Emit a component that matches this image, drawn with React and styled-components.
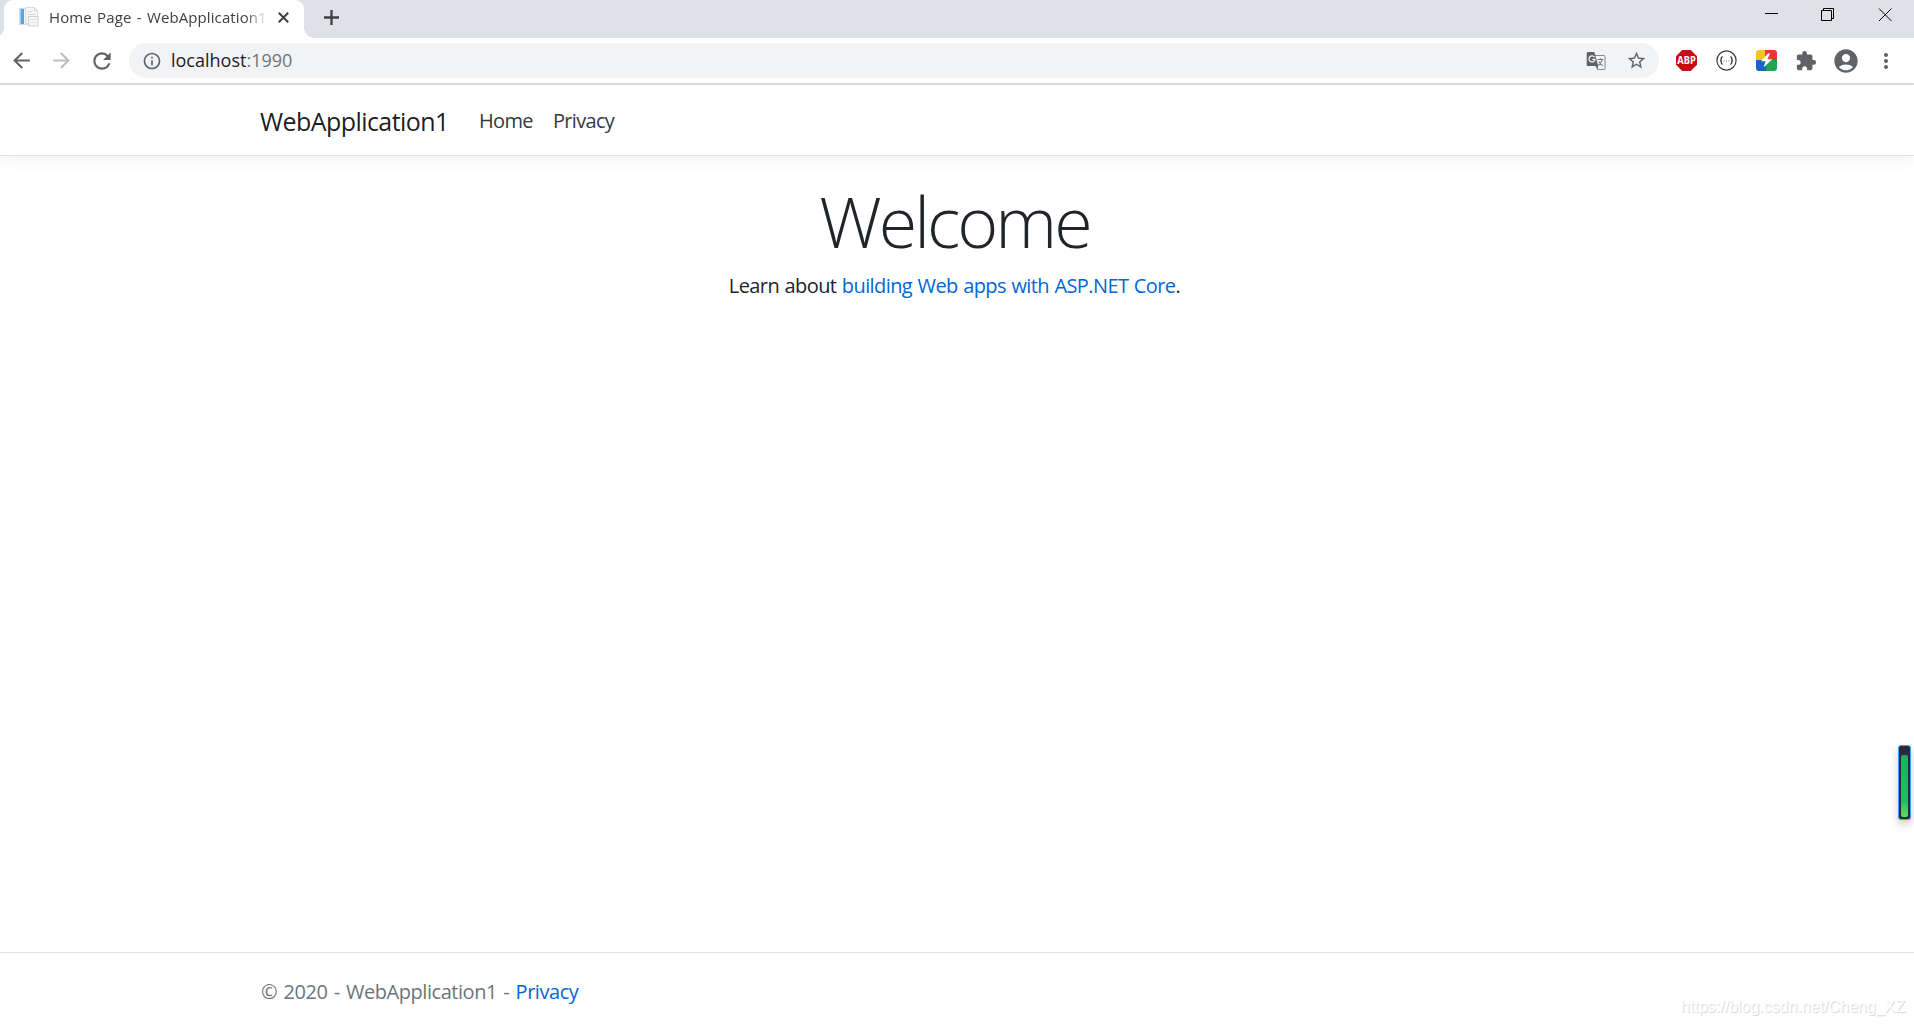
import React from "react";
import styled, { createGlobalStyle } from "styled-components";
import {
  MdArrowBack,
  MdArrowForward,
  MdRefresh,
  MdInfoOutline,
  MdStarBorder,
  MdExtension,
  MdAccountCircle,
  MdMoreVert,
} from "react-icons/md";

const GlobalStyle = createGlobalStyle`
  * { box-sizing: border-box; }
  body { margin: 0; background: #fff; overflow: hidden; }
  a { color: #0366d6; text-decoration: none; }
  svg { display: block; flex-shrink: 0; overflow: visible; }
`;

const Window = styled.div`
  position: relative;
  display: flex;
  flex-direction: column;
  height: 1025px;
  font-family: "Open Sans", "Noto Sans", sans-serif;
  color: #212529;
`;

const TabStrip = styled.div`
  display: flex;
  height: 38px;
  padding-left: 4px;
  background: #dee1e6;
`;

const Tab = styled.div`
  position: relative;
  display: flex;
  align-items: center;
  width: 300px;
  padding: 0 15px 4px;
  background: #fff;
  border-radius: 9px 9px 0 0;

  &::before,
  &::after {
    content: "";
    position: absolute;
    bottom: 0;
    width: 10px;
    height: 10px;
  }
  &::before { left: -10px; background: radial-gradient(circle at 0 0, transparent 9.5px, #fff 10px); }
  &::after { right: -10px; background: radial-gradient(circle at 100% 0, transparent 9.5px, #fff 10px); }
`;

const TabTitle = styled.span`
  width: 222px;
  margin-left: 10px;
  overflow: hidden;
  white-space: nowrap;
  font-size: 15px;
  line-height: 22px;
  letter-spacing: 0.1px;
  word-spacing: 1.3px;
  color: #3c4043;
  mask-image: linear-gradient(90deg, #000 196px, transparent 219px);
`;

const TabClose = styled.div`
  margin-left: 8px;
`;

const NewTab = styled.div`
  padding: 10px 0 0 20px;
`;

const WindowControls = styled.div`
  display: flex;
  gap: 44px;
  margin-left: auto;
  padding: 8px 22px 0 0;
`;

const Toolbar = styled.div`
  display: flex;
  align-items: center;
  height: 47px;
  padding-left: 9px;
  border-bottom: 2px solid #dadce0;
  color: #5f6368;
`;

const NavButtons = styled.div`
  display: flex;
  flex-shrink: 0;
  gap: 15px;
  width: 120px;
`;

const NavButton = styled.span`
  display: flex;
  align-items: center;
  justify-content: center;
  width: 25px;
  height: 26px;
  color: ${(p) => (p.$disabled ? "#bcbec1" : "#5f6368")};
`;

const AddressBar = styled.div`
  display: flex;
  align-items: center;
  flex-shrink: 0;
  width: 1530px;
  height: 35px;
  padding: 0 12px 0 13px;
  border-radius: 18px;
  background: #f1f3f4;
`;

const Url = styled.span`
  flex: 1;
  margin-left: 9px;
  padding-bottom: 2px;
  font-size: 18px;
  line-height: 24px;
  color: #70757a;

  b { font-weight: 400; color: #202124; }
`;

const PageActions = styled.div`
  display: flex;
  align-items: center;
  gap: 20px;
`;

const Extensions = styled.div`
  display: flex;
  flex-shrink: 0;
  margin-left: 7px;
`;

const Extension = styled.span`
  display: flex;
  align-items: center;
  justify-content: center;
  width: 40px;
  height: 40px;
`;

const Page = styled.div`
  flex: 1;
  display: flex;
  flex-direction: column;
`;

const Container = styled.div`
  display: flex;
  align-items: center;
  width: 1425px;
  height: 100%;
  margin-left: 242px;
  padding: 0 19px;
`;

const Navbar = styled.header`
  height: 71px;
  padding-top: 2px;
  border-bottom: 1px solid #dee2e6;
  box-shadow: 0 5px 15px rgba(0, 0, 0, 0.05);
`;

const Brand = styled.a`
  width: 218px;
  margin-left: -1px;
  font-size: 25px;
  line-height: 38px;
  letter-spacing: -0.56px;
  color: rgba(0, 0, 0, 0.9);
`;

const NavLink = styled.a`
  margin: 0 19px 0 1px;
  font-size: 20px;
  line-height: 30px;
  letter-spacing: -0.66px;
  color: #343a40;
`;

const Main = styled.main`
  flex: 1;
  width: 1909px;
  padding-top: 23px;
  text-align: center;
`;

const Title = styled.h1`
  margin: 0 0 8px;
  font-size: 70px;
  font-weight: 300;
  line-height: 84px;
  letter-spacing: -3px;
`;

const Lead = styled.p`
  margin: 0;
  font-size: 20px;
  line-height: 30px;
  letter-spacing: -0.6px;
  word-spacing: 0.9px;
`;

const Footer = styled.footer`
  height: 73px;
  border-top: 1px solid #dee2e6;
`;

const Copyright = styled.span`
  padding-top: 5px;
  font-size: 20px;
  line-height: 30px;
  letter-spacing: -0.46px;
  word-spacing: 1.6px;
  color: #6c757d;
`;

// floating battery-like gauge docked to the right edge
const Gauge = styled.div`
  position: absolute;
  right: 3px;
  top: 745px;
  width: 13px;
  height: 75px;
  padding: 9px 2px 2px;
  border: 1px solid #3da5ff;
  border-radius: 3px;
  background: #272a3e;
  box-shadow: 0 4px 8px rgba(0, 0, 0, 0.2);
`;

const GaugeLevel = styled.div`
  height: 100%;
  border-radius: 2px;
  background: linear-gradient(#16b35b, #20c060 75%, #62dc60);
`;

const Watermark = styled.span`
  position: absolute;
  right: 9px;
  bottom: 8px;
  font-family: "Liberation Sans", sans-serif;
  font-size: 16px;
  line-height: 20px;
  color: #fff;
  text-shadow: 1px 1px 1px #d2d2d2;
`;

const Favicon = () => (
  <svg width="20" height="20" viewBox="0 0 20 20">
    <rect x="0.5" y="1.5" width="13" height="16" fill="#f4f6f8" stroke="#d5dade" />
    <rect x="1.5" y="2" width="3.5" height="15" fill="#5aa3d8" />
    <path d="M6.5 .5h9l3 3v13h-12z" fill="#f5f6f8" stroke="#d6dae0" />
    <path d="M15.5.5v3h3M8.5 4.5h5M8.5 7.5h8M8.5 13.5h3" stroke="#d3d9e0" fill="none" />
    <rect x="9.5" y="9.5" width="9.5" height="9.5" fill="#f6f7f9" stroke="#cbd0d8" />
    <path d="M11 12.5h6.5M11 15.5h6.5" stroke="#dce1e6" />
  </svg>
);

const Translate = () => (
  <svg width="20" height="20" viewBox="0 0 20 20">
    <path d="M8 4.5h10q1 0 1 1v12q0 1-1 1h-6.5l-2-4" fill="#f1f3f4" stroke="#888b8f" />
    <path d="M2 1h6.3l4 14H2q-1.300 0-1.300-1.300V2.300Q.7 1 2 1z" fill="#5f6368" />
    <path d="M12 15l-2 .2 1.700 3.300z" fill="#5f6368" />
    <path d="M8.500 6.200A3 3 0 1 0 9 8.400H6.300" fill="none" stroke="#f1f3f4" strokeWidth="1.300" />
    <path d="M11.500 8.500h6M14.500 7.300v1.200M16.300 8.500q-.8 3.500-4 6M12.800 10.500q1.500 2.800 4 4.300" fill="none" stroke="#777a7e" strokeWidth="1.100" />
  </svg>
);

const AdBlock = () => (
  <svg width="21" height="21" viewBox="0 0 21 21">
    <path d="M6.200 0h8.600L21 6.200v8.600L14.800 21H6.200L0 14.800V6.200z" fill="#c70d12" />
    <text x="10.500" y="14.200" textAnchor="middle" textLength="18.500" lengthAdjust="spacingAndGlyphs" fontFamily="Open Sans, sans-serif" fontSize="10.500" fontWeight="700" fill="#fff">ABP</text>
  </svg>
);

const Braces = () => (
  <svg width="21" height="21" viewBox="0 0 21 21" fill="none" stroke="#3c3c3c">
    <circle cx="10.500" cy="10.500" r="9.600" strokeWidth="1.200" fill="#fff" />
    <path d="M6.800 6.800q-1.500 0-1.500 1.500v1q0 1.200-1.200 1.200 1.200 0 1.200 1.200v1q0 1.500 1.500 1.500M14.200 6.800q1.500 0 1.500 1.500v1q0 1.200 1.200 1.200-1.200 0-1.200 1.200v1q0 1.500-1.500 1.500" strokeWidth="1.300" />
    <path d="M7.500 11h1M10 11h1M12.500 11h1" stroke="#777" />
  </svg>
);

const Bolt = () => (
  <svg width="21" height="21" viewBox="0 0 21 21">
    <path d="M3 0h8L9 11H0V3q0-3 3-3z" fill="#f9c31c" />
    <path d="M9 0h9q3 0 3 3v8H9z" fill="#e63a33" />
    <path d="M0 10h11v11H3q-3 0-3-3z" fill="#1766c0" />
    <path d="M10 10h11v8q0 3-3 3h-8z" fill="#22a451" />
    <path d="M12 3.500L5 11.300h4.600L7.500 17.500l8.700-8.300h-4.800l2.600-5.700z" fill="#fff" />
  </svg>
);

const TabBar = () => (
  <TabStrip>
    <Tab>
      <Favicon />
      <TabTitle>Home Page - WebApplication1</TabTitle>
      <TabClose>
        <svg width="11" height="11" viewBox="0 0 11 11" stroke="#3c4043" strokeWidth="2">
          <path d="M.8.8l9.400 9.400M10.200.8L.8 10.200" />
        </svg>
      </TabClose>
    </Tab>
    <NewTab>
      <svg width="15" height="15" viewBox="0 0 15 15" stroke="#3c4043" strokeWidth="2.300">
        <path d="M7.500 0v15M0 7.500h15" />
      </svg>
    </NewTab>
    <WindowControls>
      <svg width="13" height="13" viewBox="0 0 13 13" stroke="#000">
        <path d="M1 5.500h13" />
      </svg>
      <svg width="13" height="13" viewBox="0 0 13 13" stroke="#000" fill="none">
        <path d="M.5 2.500h10v10H.5zM2.500 2.500v-2h10v10h-2" />
      </svg>
      <svg width="14" height="14" viewBox="0 0 14 14" stroke="#000">
        <path d="M1 .500l12.500 12.500M13.500.500l-12.500 12.500" />
      </svg>
    </WindowControls>
  </TabStrip>
);

const BrowserToolbar = () => (
  <Toolbar>
    <NavButtons>
      <NavButton><MdArrowBack size={25} /></NavButton>
      <NavButton $disabled><MdArrowForward size={25} /></NavButton>
      <NavButton><MdRefresh size={26} /></NavButton>
    </NavButtons>
    <AddressBar>
      <MdInfoOutline size={20} />
      <Url><b>localhost</b>:1990</Url>
      <PageActions>
        <Translate />
        <MdStarBorder size={21} />
      </PageActions>
    </AddressBar>
    <Extensions>
      <Extension><AdBlock /></Extension>
      <Extension><Braces /></Extension>
      <Extension><Bolt /></Extension>
      <Extension><MdExtension size={22} /></Extension>
      <Extension><MdAccountCircle size={28} /></Extension>
      <Extension><MdMoreVert size={24} /></Extension>
    </Extensions>
  </Toolbar>
);

const App = () => {
  return (
    <Window>
      <GlobalStyle />
      <TabBar />
      <BrowserToolbar />
      <Page>
        <Navbar>
          <Container>
            <Brand href="#">WebApplication1</Brand>
            <NavLink href="#">Home</NavLink>
            <NavLink href="#">Privacy</NavLink>
          </Container>
        </Navbar>
        <Main>
          <Title>Welcome</Title>
          <Lead>
            Learn about <a href="#">building Web apps with ASP.NET Core</a>.
          </Lead>
        </Main>
        <Footer>
          <Container>
            <Copyright>
              © 2020 - WebApplication1 - <a href="#">Privacy</a>
            </Copyright>
          </Container>
        </Footer>
      </Page>
      <Gauge>
        <GaugeLevel />
      </Gauge>
      <Watermark>https://blog.csdn.net/Cheng_XZ</Watermark>
    </Window>
  );
};

export default App;
